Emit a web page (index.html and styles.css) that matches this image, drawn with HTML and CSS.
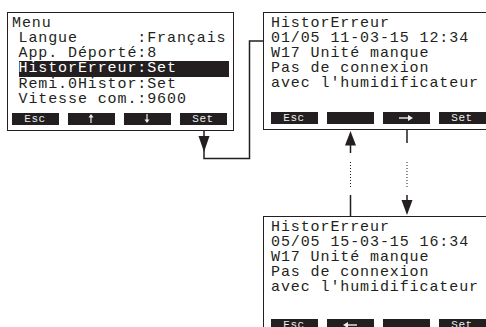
FILE: index.html
```html
<!DOCTYPE html>
<html>
	<head>
		<title>Menu HistorErreur</title>
		<link rel="stylesheet" href="styles.css">
	</head>
	<body>
		<div id="diagram">
			<div class="screen" id="menu">
				<div class="title">Menu</div>
				<div class="list">
					<div class="row">Langue      :Français</div>
					<div class="row">App. Déporté:8</div>
					<div class="row selected">HistorErreur:Set</div>
					<div class="row">Remi.0Histor:Set</div>
					<div class="row">Vitesse com.:9600</div>
				</div>
				<div class="keys">
					<span class="key">Esc</span>
					<span class="key">
						<svg width="6" height="9" viewBox="0 0 6 9"><path d="M3 9V3" stroke="#eee" stroke-width="1.2"/><polygon points="0.5,3.5 5.5,3.5 3,0" fill="#eee"/></svg>
					</span>
					<span class="key">
						<svg width="6" height="9" viewBox="0 0 6 9"><path d="M3 0V6" stroke="#eee" stroke-width="1.2"/><polygon points="0.5,5.5 5.5,5.5 3,9" fill="#eee"/></svg>
					</span>
					<span class="key">Set</span>
				</div>
			</div>

			<div class="screen wide" id="hist1">
				<div class="text">
					<div class="line">HistorErreur</div>
					<div class="line">01/05 11-03-15 12:34</div>
					<div class="line">W17 Unité manque</div>
					<div class="line">Pas de connexion</div>
					<div class="line">avec l'humidificateur</div>
				</div>
				<div class="keys">
					<span class="key">Esc</span>
					<span class="key"></span>
					<span class="key">
						<svg width="14" height="8" viewBox="0 0 14 8"><path d="M0 4H10" stroke="#eee" stroke-width="1.4"/><polygon points="9,1 14,4 9,7" fill="#eee"/></svg>
					</span>
					<span class="key">Set</span>
				</div>
			</div>

			<div class="screen wide" id="hist2">
				<div class="text">
					<div class="line">HistorErreur</div>
					<div class="line">05/05 15-03-15 16:34</div>
					<div class="line">W17 Unité manque</div>
					<div class="line">Pas de connexion</div>
					<div class="line">avec l'humidificateur</div>
				</div>
				<div class="keys">
					<span class="key">Esc</span>
					<span class="key">
						<svg width="14" height="8" viewBox="0 0 14 8"><path d="M4 4H14" stroke="#eee" stroke-width="1.4"/><polygon points="5,1 0,4 5,7" fill="#eee"/></svg>
					</span>
					<span class="key"></span>
					<span class="key">Set</span>
				</div>
			</div>

			<svg class="links" width="486" height="327" viewBox="0 0 486 327">
				<g stroke="#231f20" fill="none" stroke-width="1.5">
					<path d="M204 131V158.5H249.5V41H263"/>
					<path d="M350.5 145V153M350.5 195V216"/>
					<path d="M407 130V143M407 195V201"/>
				</g>
				<g stroke="#231f20" stroke-width="1" stroke-dasharray="1 2">
					<path d="M350.5 162V187"/>
					<path d="M407 162V188"/>
				</g>
				<g fill="#231f20">
					<polygon points="198.5,136 209.5,136 204,152"/>
					<polygon points="345,145.5 356,145.5 350.5,131"/>
					<polygon points="401.5,200 412.5,200 407,215"/>
				</g>
			</svg>
		</div>
	</body>
</html>
```

FILE: styles.css
```css
body {
	margin: 0;
	background: #fff;
	overflow: hidden;
}

#diagram {
	position: relative;
	width: 486px;
	height: 327px;
	overflow: hidden;
	font-family: "Courier New", "Nimbus Mono PS", "FreeMono", "Liberation Mono", monospace;
	color: #231f20;
}

.links {
	position: absolute;
	left: 0;
	top: 0;
	pointer-events: none;
}

.screen {
	position: absolute;
	box-sizing: border-box;
	display: flex;
	flex-direction: column;
	border: 1.5px solid #231f20;
	background: #fff;
	padding: 3px 0 5px 4px;
	font-size: 15px;
	letter-spacing: 0.9px;
}

#menu {
	left: 7px;
	top: 12px;
	width: 227px;
	height: 119px;
}

.wide {
	width: 240px;
	padding-left: 7px;
}

#hist1 {
	left: 263px;
	top: 12px;
	height: 118px;
}

#hist2 {
	left: 263px;
	top: 216px;
	height: 121px;
}

.title, .row, .line {
	line-height: 15px;
	white-space: pre;
}

.list {
	margin: 0 4px 0 6.5px;
}

.row.selected {
	line-height: 16px;
	background: #231f20;
	color: #fff;
}

.keys {
	display: grid;
	grid-template-columns: repeat(4, 47px);
	column-gap: 9px;
	margin-top: auto;
	margin-left: -0.5px;
}

.key {
	display: flex;
	align-items: center;
	justify-content: center;
	height: 12.5px;
	background: #231f20;
	color: #eee;
	font-size: 11px;
	letter-spacing: 0.5px;
	line-height: 12px;
}
```
